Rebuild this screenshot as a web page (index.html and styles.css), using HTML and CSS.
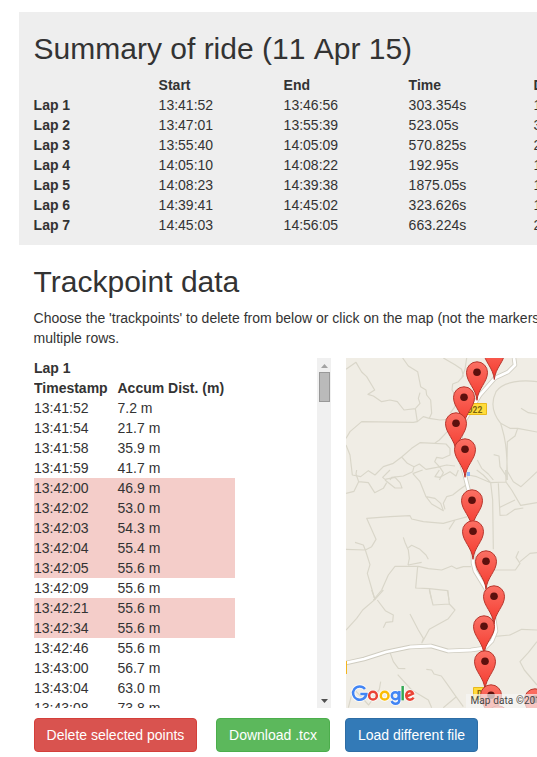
FILE: index.html
```html
<!DOCTYPE html>
<html lang="en">
<head>
<meta charset="utf-8">
<title>Ride summary</title>
<link rel="stylesheet" href="styles.css">
</head>
<body>
<main class="page">
  <section class="summary">
    <h2>Summary of ride (11 Apr 15)</h2>
    <div class="laps">
      <b></b><b>Start</b><b>End</b><b>Time</b><b>Dist</b>
      <b>Lap 1</b><span>13:41:52</span><span>13:46:56</span><span>303.354s</span><span>1</span>
      <b>Lap 2</b><span>13:47:01</span><span>13:55:39</span><span>523.05s</span><span>3</span>
      <b>Lap 3</b><span>13:55:40</span><span>14:05:09</span><span>570.825s</span><span>2</span>
      <b>Lap 4</b><span>14:05:10</span><span>14:08:22</span><span>192.95s</span><span>1</span>
      <b>Lap 5</b><span>14:08:23</span><span>14:39:38</span><span>1875.05s</span><span>1</span>
      <b>Lap 6</b><span>14:39:41</span><span>14:45:02</span><span>323.626s</span><span>1</span>
      <b>Lap 7</b><span>14:45:03</span><span>14:56:05</span><span>663.224s</span><span>2</span>
    </div>
  </section>
  <section class="track">
    <h2>Trackpoint data</h2>
    <p>Choose the 'trackpoints' to delete from below or click on the map (not the markers)<br>multiple rows.</p>
    <div class="panes">
      <div class="list">
        <div class="points">
          <b class="lap">Lap 1</b>
          <div class="row head"><span>Timestamp</span><span>Accum Dist. (m)</span></div>
          <div class="row"><span>13:41:52</span><span>7.2 m</span></div>
          <div class="row"><span>13:41:54</span><span>21.7 m</span></div>
          <div class="row"><span>13:41:58</span><span>35.9 m</span></div>
          <div class="row"><span>13:41:59</span><span>41.7 m</span></div>
          <div class="row selected"><span>13:42:00</span><span>46.9 m</span></div>
          <div class="row selected"><span>13:42:02</span><span>53.0 m</span></div>
          <div class="row selected"><span>13:42:03</span><span>54.3 m</span></div>
          <div class="row selected"><span>13:42:04</span><span>55.4 m</span></div>
          <div class="row selected"><span>13:42:05</span><span>55.6 m</span></div>
          <div class="row"><span>13:42:09</span><span>55.6 m</span></div>
          <div class="row selected"><span>13:42:21</span><span>55.6 m</span></div>
          <div class="row selected"><span>13:42:34</span><span>55.6 m</span></div>
          <div class="row"><span>13:42:46</span><span>55.6 m</span></div>
          <div class="row"><span>13:43:00</span><span>56.7 m</span></div>
          <div class="row"><span>13:43:04</span><span>63.0 m</span></div>
          <div class="row"><span>13:43:08</span><span>73.8 m</span></div>
        </div>
        <div class="scrollbar">
          <svg width="14" height="14" viewBox="0 0 14 14"><path d="M4 10h7L7.500 6z" fill="#a3a3a3"/></svg>
          <div class="thumb"></div>
          <svg class="down" width="14" height="14" viewBox="0 0 14 14"><path d="M4 5h7L7.500 9z" fill="#505050"/></svg>
        </div>
      </div>
      <div class="map">
        <svg width="191" height="350" viewBox="0 0 191 350">
          <defs>
            <linearGradient id="red" x1="0" y1="0" x2="0" y2="1"><stop offset="0" stop-color="#fb7064"/><stop offset="1" stop-color="#f4392d"/></linearGradient>
            <g id="pin">
              <path d="M0 28C-1 16-10.500 10-10.500 0A10.500 10.500 0 0 1 10.500 0C10.500 10 1 16 0 28z" fill="url(#red)" stroke="#b8352c" stroke-width="1"/>
              <circle r="3.800" fill="#5c100d"/>
            </g>
          </defs>
          <g class="lanes">
            <g transform="translate(-6 -8) scale(.33333)">
              <path d="M18 58L48 37L65 66L80 80L104 120L84 133L100 138L125 155L150 150L172 155L192 180L226 176L240 160L235 145L240 128M226 176L232 215"/>
              <path d="M188 24L205 48L233 65L242 110L258 120L260 135L272 150L275 190L268 205L250 200L232 215L220 217L65 215L30 245L18 265M268 205L300 210L330 208"/>
              <path d="M310 24L345 44L365 58L370 78L355 95L338 102L336 120L348 140L345 170L330 190M380 24L375 58L366 80"/>
              <path d="M591 95C550 90 490 92 468 125C448 165 462 195 482 220C490 250 502 270 502 390M482 220L510 235L533 235L591 246M533 235L525 258L502 275L500 390"/>
              <path d="M543 175L565 188L591 192"/>
              <path d="M345 210L322 245L298 270L284 280L240 278L215 295L185 321L160 340L130 350L105 375L85 362L62 380L37 375L30 315L18 285M284 280L318 282L330 295L330 315L308 325L290 322L284 335L300 352L310 368L298 390M185 321L202 340L222 350L238 342L258 358L290 352L320 345L345 348M222 350L218 365L190 378L155 382L150 390"/>
              <path d="M461 314L477 318L480 350L500 380M412 330L425 355L445 372L460 390"/>
            </g>
            <g transform="translate(-6 112) scale(.33333)">
              <path d="M18 70L42 64L56 35L48 12L50 0M56 35L85 38L104 68L130 55L140 38M150 0L128 22L135 28L165 22L180 38L186 54L165 54L135 30M298 0L285 20L300 22L330 5L348 18L355 0M218 10L240 35L258 80L275 102L310 122L302 100L285 85L258 80M220 10L248 0M378 45L360 58L338 75L320 80L310 100L315 118"/>
              <path d="M385 15L410 20L452 38L498 36L497 0M410 0L430 15L452 38L458 90L460 238M475 40L480 136L500 135L525 118L550 114M480 112L525 90M498 36L515 60L542 106L591 98M500 0L520 35L543 50L570 25L591 5"/>
              <path d="M383 140L345 150L310 160L250 155L215 147L210 137L150 140L80 145L108 208L95 230L76 240L18 238M76 240L70 225L45 217M76 240L90 284L82 310L105 390M345 150L327 178M190 202L196 220L205 240L208 265L204 285M205 233L215 226L240 238L258 255L265 268M204 285L245 277M393 290L370 290L350 296L335 288L305 300L265 296L235 289L165 289L145 315L125 360L100 390M233 289L227 354L268 356L323 362L327 390M268 356L275 390M462 300L526 300L540 280L528 262L536 244M540 275L570 250L591 248"/>
            </g>
            <g transform="translate(-6 232) scale(.33333)">
              <path d="M130 0L105 28L95 0M105 28L68 60L50 85L18 120M112 30L136 62L160 75L158 95L138 97L130 113M268 0L279 45L328 42L323 0M328 42L345 60L325 86L268 118L245 160M210 72L235 120L250 145L245 160"/>
              <path d="M148 182L160 215L175 235L196 236M259 238L275 240L282 252L304 258L320 280L348 320L370 350M173 254L215 300L265 330L275 353M122 275L118 298L86 345L63 320L40 295L25 353M348 321L310 353M591 120L545 118L510 135L466 139M591 155L565 188L540 215L553 240L591 285"/>
            </g>
          </g>
          <g class="road">
            <path id="main-road" d="M168 0L169 7L162 14L149 20L134 37L117 65L112 93L119 118L127 150L127 205L129 213L140 231L148 260L150 273L146 283L139 290L125 292L102 293L85 288L64 289L40 294L18 301L0 305"/>
            <use href="#main-road" class="surface"/>
          </g>
          <path d="M121 114h3v4h-3z" fill="#8ab4f8"/>
          <path d="M0 303h1v13H0z" fill="#f2b51f"/>
          <path d="M118.500 45.500h22v11h-22zM127.500 329.500h18v12h-18z" fill="#ffdc3b" stroke="#e9b91c"/>
          <text x="121" y="54.500" class="shield">D22</text><text x="131" y="338.500" class="shield">D</text>
          <use href="#pin" x="148.300" y="-6.500"/>
          <use href="#pin" x="131" y="14.300"/>
          <use href="#pin" x="118" y="39.300"/>
          <use href="#pin" x="110" y="65.300"/>
          <use href="#pin" x="119" y="91.300"/>
          <use href="#pin" x="126" y="142.300"/>
          <use href="#pin" x="127" y="173.300"/>
          <use href="#pin" x="140" y="203.300"/>
          <use href="#pin" x="148" y="238.300"/>
          <use href="#pin" x="138" y="268.300"/>
          <use href="#pin" x="139" y="303.300"/>
          <use href="#pin" x="145" y="337.300"/>
          <use href="#pin" x="189" y="341.300"/>
          <use href="#pin" x="152" y="358.300"/>
          <g transform="translate(-6 232) scale(.33333)" fill="none">
            <g stroke="#fff" stroke-width="13" stroke-linejoin="round" opacity=".8"><path d="M75 297A20 20 0 1 0 79 312H61"/><circle cx="99" cy="317" r="11.500"/><circle cx="134" cy="317" r="11.500"/><circle cx="166" cy="317" r="10.500"/><path d="M178 303v26q0 12-12 12-8 0-11-8M188 288v43"/><path d="M199 320l20-9q-3-7-9-7c-15 0-15 25 0 25q7 0 11-6"/></g>
            <g stroke-width="7.500"><path d="M75 297A20 20 0 1 0 79 312H61" stroke="#4285f4"/><circle cx="99" cy="317" r="11.500" stroke="#ea4335"/><circle cx="134" cy="317" r="11.500" stroke="#fbbc05"/><path d="M178 303v26q0 12-12 12-8 0-11-8" stroke="#4285f4"/><circle cx="166" cy="317" r="10.500" stroke="#4285f4"/><path d="M188 288v43" stroke="#34a853"/><path d="M199 320l20-9q-3-7-9-7c-15 0-15 25 0 25q7 0 11-6" stroke="#ea4335"/></g>
          </g>
        </svg>
        <div class="credit">Map data ©2015 Google</div>
      </div>
    </div>
    <div class="actions">
      <button class="btn danger">Delete selected points</button>
      <button class="btn success">Download .tcx</button>
      <button class="btn primary">Load different file</button>
    </div>
  </section>
</main>
</body>
</html>
```
FILE: styles.css
```css
* { box-sizing: border-box; }
body {
  margin: 0;
  background: #fff;
  color: #333;
  font: 14px/20px "Liberation Sans", Arial, sans-serif;
}
.page {
  height: 757px;
  padding: 12px 0 0 19px;
  overflow: hidden;
}
h2 {
  margin: 0 0 10px;
  font-size: 30px;
  font-weight: 400;
  line-height: 33px;
  white-space: nowrap;
}
.summary {
  height: 233px;
  padding: 20px 0 0 14.600px;
  background: #eee;
  overflow: hidden;
}
.summary h2 { font-kerning: none; }
.laps {
  display: grid;
  grid-template-columns: repeat(5, 125px);
  grid-auto-rows: 20px;
}
.track { padding: 20px 0 0 15px; }
.track h2,
p { margin-left: -.400px; }
p {
  margin-top: 0;
  margin-bottom: 10px;
  white-space: nowrap;
}
.panes {
  display: flex;
  gap: 15px;
  height: 350px;
}
.list {
  display: flex;
  flex: none;
  justify-content: space-between;
  width: 297px;
  overflow: hidden;
}
.points { width: 201px; }
.lap { display: block; }
.row {
  display: grid;
  grid-template-columns: 83.500px 1fr;
  height: 20px;
  white-space: nowrap;
}
.head { font-weight: bold; }
.selected { background: #f4cdc9; }
.scrollbar {
  display: flex;
  flex-direction: column;
  width: 14px;
  background: #f0f0f0;
}
.thumb {
  width: 11px;
  height: 30px;
  margin-left: 2px;
  background: #bababa;
  border: 1px solid #989898;
}
.down { margin-top: auto; }
.map {
  position: relative;
  flex: none;
  width: 191px;
  background: #f0ede5;
  overflow: hidden;
}
.map svg { display: block; }
.lanes {
  fill: none;
  stroke: #d9d6c9;
  stroke-width: 3.500;
  stroke-linejoin: round;
}
.road {
  fill: none;
  stroke: #cfccc0;
  stroke-width: 4.500;
  stroke-linejoin: round;
}
.surface { stroke: #fff; stroke-width: 2.800; }
.shield {
  fill: #7a6410;
  font: bold 8.500px Roboto, sans-serif;
}
.credit {
  position: absolute;
  bottom: 0;
  left: 120px;
  height: 14px;
  padding-left: 4.500px;
  background: rgba(245, 245, 245, .7);
  color: #444;
  font: 10px/14px Roboto, sans-serif;
  letter-spacing: .100px;
  white-space: nowrap;
}
.actions {
  display: flex;
  padding-top: 10px;
}
.btn {
  height: 34px;
  padding: 0;
  border: 1px solid;
  border-radius: 4px;
  color: #fff;
  font: 14px/20px "Liberation Sans", Arial, sans-serif;
  white-space: nowrap;
}
.danger {
  width: 163px;
  margin-right: 19px;
  background: #d9534f;
  border-color: #d43f3a;
}
.success {
  width: 114px;
  margin-right: 15px;
  background: #5cb85c;
  border-color: #4cae4c;
}
.primary {
  width: 133px;
  background: #337ab7;
  border-color: #2e6da4;
}
```
